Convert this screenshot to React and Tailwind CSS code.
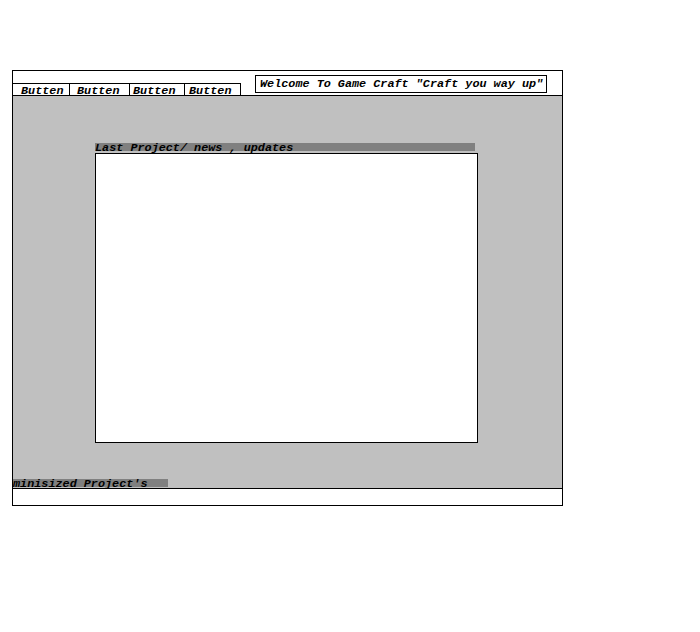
import React from 'react';

const buttons = [
  { w: 'w-[57px]', pl: 'pl-[8px]' },
  { w: 'w-[60px]', pl: 'pl-[7px]' },
  { w: 'w-[55px]', pl: 'pl-[3px]' },
  { w: 'w-[56px]', pl: 'pl-[4px]' },
];

const App = () => {
  return (
    <div className="w-[700px] h-[632px] bg-white pt-[70px] pl-[12px] font-['Liberation_Mono',monospace] text-[11.8px] font-bold italic text-black">
      <div className="w-[551px] border border-black flex flex-col">
        {/* Header: tab buttons + welcome banner */}
        <div className="h-[25px] border-b border-black flex items-start">
          <div className="self-end flex h-[12px] border-t border-black">
            {buttons.map((b, idx) => (
              <div key={idx} className={`${b.w} ${b.pl} h-[11px] border-r border-black leading-[14px]`}>
                Butten
              </div>
            ))}
          </div>
          <div className="mt-[4px] ml-[14px] w-[292px] h-[18px] border border-black pl-[4px] leading-[16px] whitespace-pre overflow-hidden">
            Welcome To Game Craft "Craft you way up"
          </div>
        </div>

        {/* Main gray area */}
        <div className="h-[393px] bg-[#c0c0c0] border-b border-black flex flex-col">
          <div className="pt-[47px] pl-[82px] flex flex-col">
            <div className="w-[380px] h-[8px] bg-[#808080] leading-[10px] whitespace-pre">
              Last Project/ news , updates
            </div>
            <div className="mt-[2px] w-[383px] h-[290px] bg-white border border-black"></div>
          </div>
          <div className="mt-[36px] w-[155px] h-[8px] bg-[#808080] leading-[10px] whitespace-pre">
            minisized Project's
          </div>
        </div>

        {/* Minimized projects strip */}
        <div className="h-[16px] bg-white"></div>
      </div>
    </div>
  );
};

export default App;
